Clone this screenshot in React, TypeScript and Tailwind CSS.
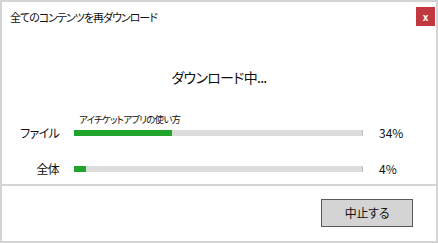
import React from 'react';

const Bar: React.FC<{ value: number }> = ({ value }) => (
  <div className="w-[289px] h-[6px] bg-[#dcdcdc] border-r border-[#bdbdbd]">
    <div className="h-full bg-[#1ea52a]" style={{ width: `${value}%` }} />
  </div>
);

const App: React.FC = () => {
  return (
    <div className="w-[438px] h-[243px] border-2 border-[#d4d4d4] bg-white flex flex-col text-[#111] font-['Noto_Sans_CJK_JP',sans-serif] [font-feature-settings:'palt']">
      {/* Title bar */}
      <div className="flex justify-between items-start pl-[8px] pt-[5px] pr-[1px]">
        <span className="text-[11px] leading-[20px] tracking-[-1px]">全てのコンテンツを再ダウンロード</span>
        <button className="w-[19px] h-[19px] bg-[#c1393f] text-white text-[10px] font-bold leading-none flex items-center justify-center">x</button>
      </div>

      {/* Progress area */}
      <div className="flex-1 flex flex-col">
        <h1 className="text-center text-[14px] leading-[22px] tracking-[-0.7px] mt-[39px]">ダウンロード中...</h1>
        <div className="pl-[77px] mt-[24px] text-[9.5px] leading-[14px] tracking-[-0.8px]">アイチケットアプリの使い方</div>
        <div className="flex items-center h-[16px] mt-[-1px]">
          <span className="w-[57px] text-right text-[12px] tracking-[-0.7px]">ファイル</span>
          <div className="ml-[15px]"><Bar value={34} /></div>
          <span className="ml-[16px] text-[12px]">34%</span>
        </div>
        <div className="flex items-center h-[16px] mt-[20px]">
          <span className="w-[57px] text-right text-[12px] tracking-[-0.7px]">全体</span>
          <div className="ml-[15px]"><Bar value={4} /></div>
          <span className="ml-[16px] text-[12px]">4%</span>
        </div>
      </div>

      {/* Footer */}
      <div className="border-t-2 border-[#d4d4d4] h-[57px] flex items-start justify-end pr-[23px] pt-[13px]">
        <button className="w-[92px] h-[28px] bg-[#d4d4d4] border border-[#5a5a5a] text-[12px] tracking-[-0.3px]">中止する</button>
      </div>
    </div>
  );
};

export default App;
